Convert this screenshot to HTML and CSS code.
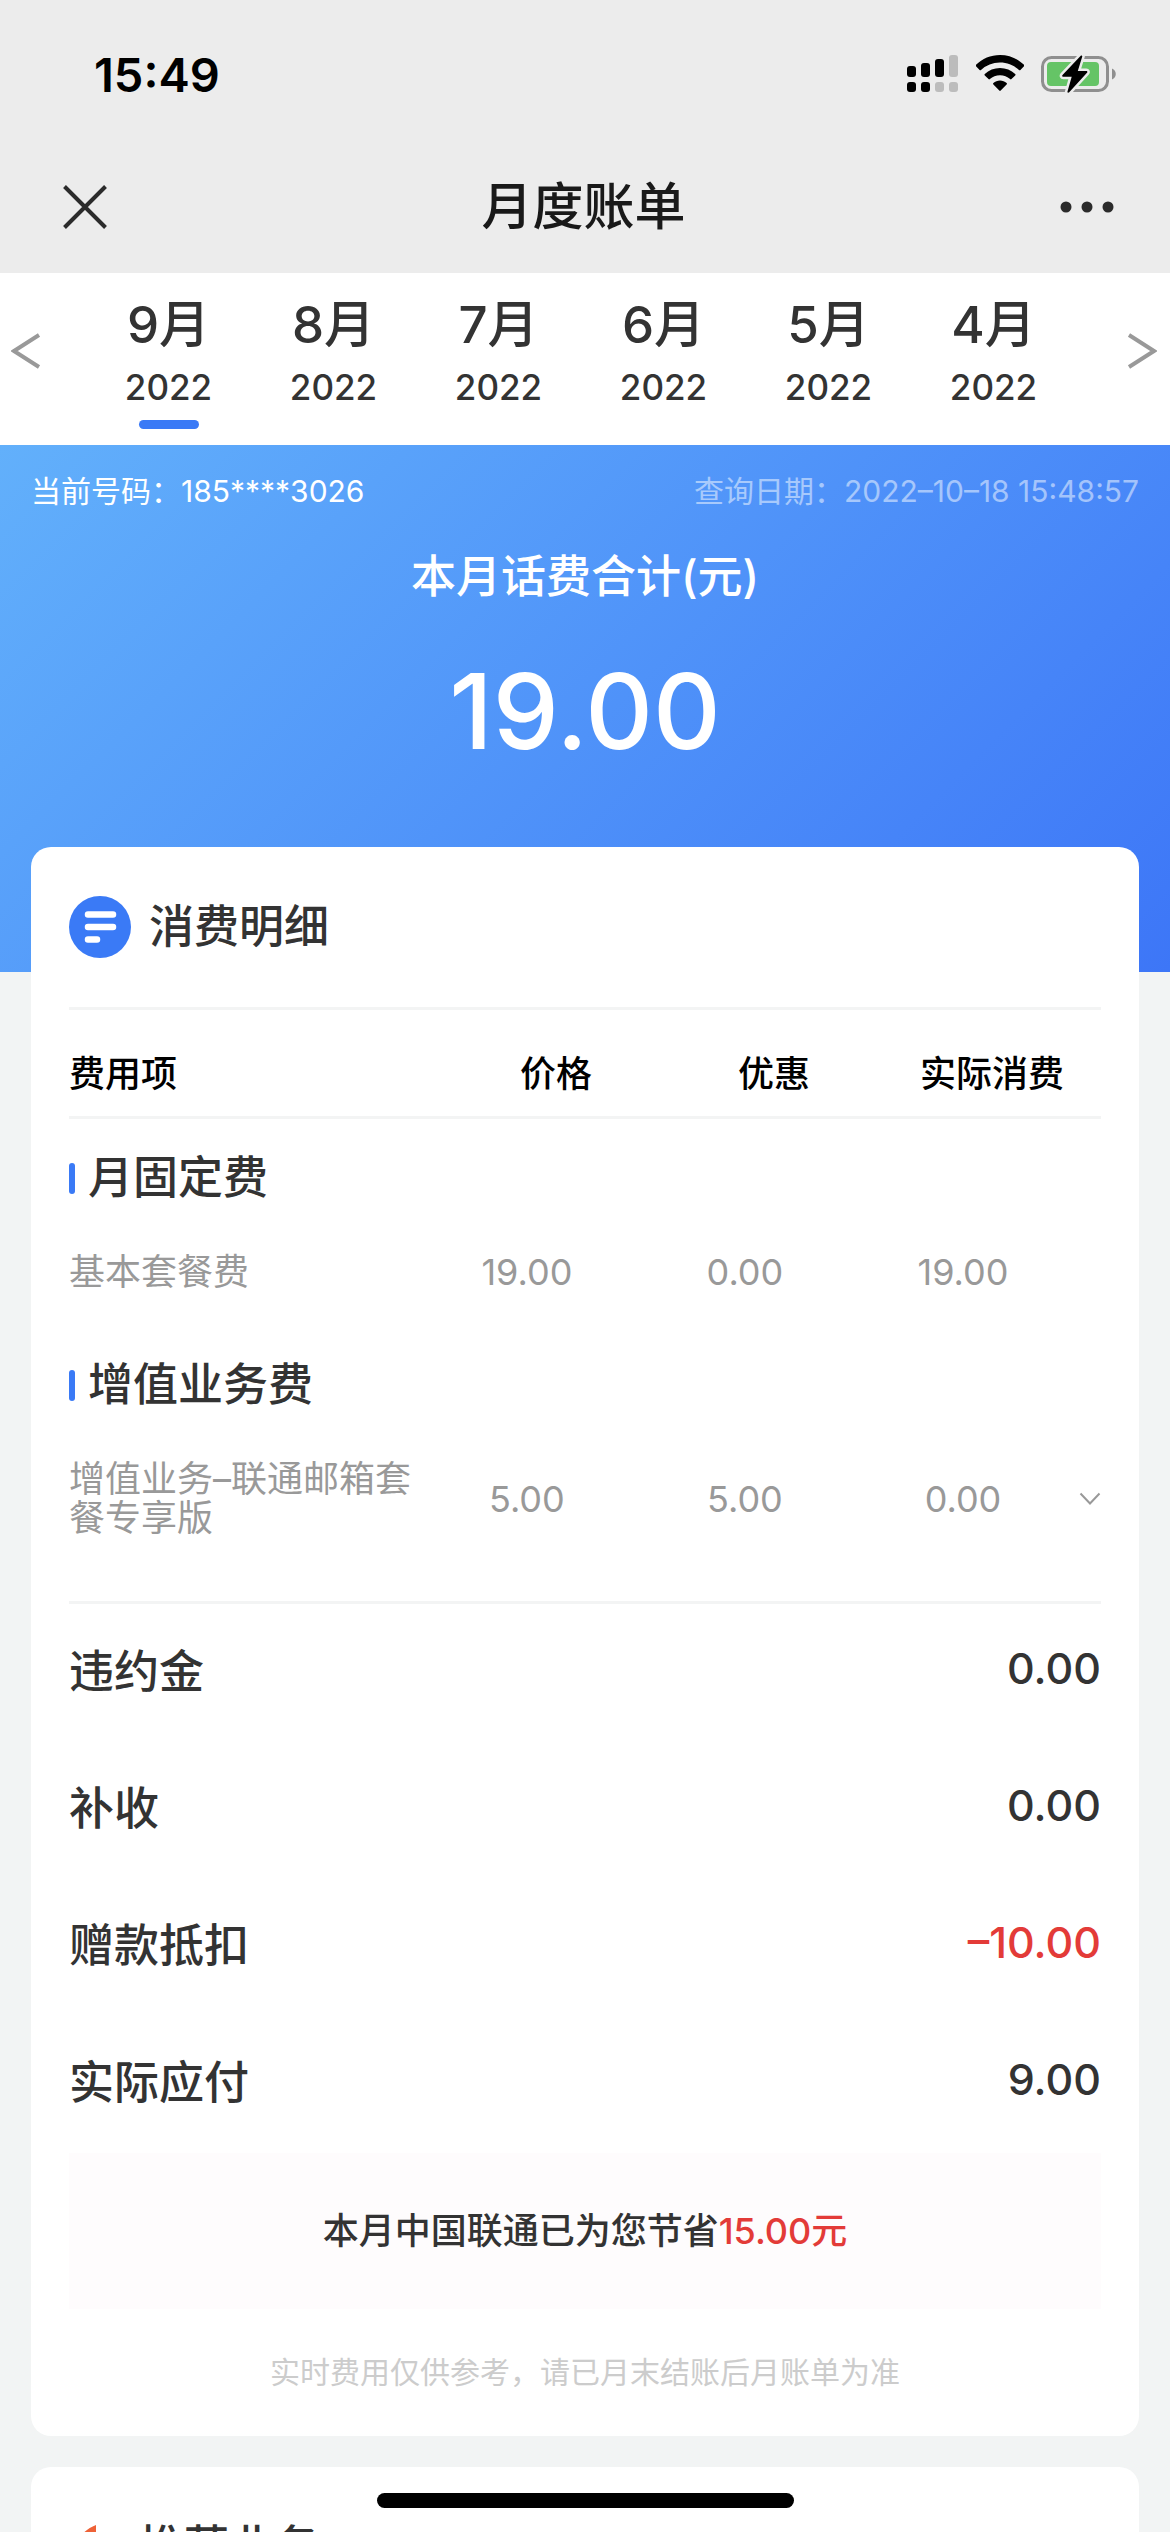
FILE: index.html
```html
<!DOCTYPE html>
<html lang="zh-CN">
<head>
    <meta charset="UTF-8">
    <meta name="viewport" content="width=device-width, initial-scale=1.0">
    <title>月度账单</title>
    <link rel="stylesheet" href="styles.css">
</head>
<body>
    <header class="topbar">
        <div class="status">
            <span class="time">15:49</span>
            <div class="status-icons">
                <svg width="52" height="38" viewBox="0 0 52 38">
                    <rect x="0" y="11" width="9" height="11" rx="3"/>
                    <rect x="14" y="8" width="9" height="14" rx="3"/>
                    <rect x="28" y="4" width="9" height="18" rx="3"/>
                    <rect x="42" y="0" width="9" height="22" rx="3" fill="#bcbcbc"/>
                    <rect x="0" y="27" width="9" height="10" rx="3"/>
                    <rect x="14" y="27" width="9" height="10" rx="3"/>
                    <rect x="28" y="27" width="9" height="10" rx="3" fill="#bcbcbc"/>
                    <rect x="42" y="27" width="9" height="10" rx="3" fill="#bcbcbc"/>
                </svg>
                <svg width="48" height="38" viewBox="0 0 48 38">
                    <path d="M24 0C14.700 0 6.200 3.700 0 9.800a1 1 0 0 0 0 1.400l3.600 3.700a1 1 0 0 0 1.400 0A27.400 27.400 0 0 1 24 7.400c7.400 0 14.100 2.900 19 7.500a1 1 0 0 0 1.400 0l3.600-3.700a1 1 0 0 0 0-1.400C41.800 3.700 33.300 0 24 0z"/>
                    <path d="M24 13c-5.800 0-11.200 2.200-15.200 5.900a1 1 0 0 0 0 1.500l3.700 3.700a1 1 0 0 0 1.400 0c2.700-2.300 6.200-3.800 10.100-3.800s7.400 1.500 10.100 3.800a1 1 0 0 0 1.400 0l3.700-3.700a1 1 0 0 0 0-1.500C35.200 15.200 29.800 13 24 13z"/>
                    <path d="M24 25.500c-2.500 0-4.800.9-6.600 2.400a1 1 0 0 0 0 1.500l5.900 6.200a1 1 0 0 0 1.400 0l5.900-6.200a1 1 0 0 0 0-1.500c-1.800-1.500-4.100-2.400-6.600-2.400z"/>
                </svg>
                <svg width="76" height="38" viewBox="0 0 76 38">
                    <rect x="1.500" y="2.500" width="65" height="33" rx="9" fill="none" stroke="#8f8f8f" stroke-width="3"/>
                    <path d="M71 13.500c5 2 5 9 0 11z" fill="#8f8f8f"/>
                    <rect x="6" y="7" width="52" height="24" rx="4" fill="#65c466"/>
                    <path d="M39.500 1L21.500 20c-.7.800-.3 1.800.8 1.800h8.400L26.500 36.500c-.4 1.300.8 1.700 1.700.8L46 17.800c.7-.8.300-1.800-.8-1.800h-8.400L41.200 1.800c.4-1.300-.8-1.700-1.700-.8z" stroke="#ececec" stroke-width="5" paint-order="stroke"/>
                </svg>
            </div>
        </div>
        <div class="nav">
            <button class="nav-btn" aria-label="关闭">
                <svg width="44" height="44" viewBox="0 0 44 44" fill="none" stroke="#2b2b2b" stroke-width="4">
                    <path d="M1.500 1.500l41 41M42.500 1.500l-41 41"/>
                </svg>
            </button>
            <h1>月度账单</h1>
            <button class="nav-btn" aria-label="更多">
                <svg width="54" height="12" viewBox="0 0 54 12" fill="#2b2b2b">
                    <circle cx="6" cy="6" r="5.500"/>
                    <circle cx="27" cy="6" r="5.500"/>
                    <circle cx="48" cy="6" r="5.500"/>
                </svg>
            </button>
        </div>
    </header>

    <nav class="months">
        <button class="arrow" aria-label="上一页">
            <svg width="30" height="38" viewBox="0 0 30 38" fill="none" stroke="#999" stroke-width="4">
                <path d="M28 3L3 19l25 16"/>
            </svg>
        </button>
        <div class="month-list">
            <button class="month active"><b>9月</b><span>2022</span></button>
            <button class="month"><b>8月</b><span>2022</span></button>
            <button class="month"><b>7月</b><span>2022</span></button>
            <button class="month"><b>6月</b><span>2022</span></button>
            <button class="month"><b>5月</b><span>2022</span></button>
            <button class="month"><b>4月</b><span>2022</span></button>
        </div>
        <button class="arrow" aria-label="下一页">
            <svg width="30" height="38" viewBox="0 0 30 38" fill="none" stroke="#999" stroke-width="4">
                <path d="M2 3l25 16L2 35"/>
            </svg>
        </button>
    </nav>

    <section class="banner">
        <div class="banner-info">
            <span>当前号码：185****3026</span>
            <span class="query-date">查询日期：2022–10–18 15:48:57</span>
        </div>
        <p class="banner-title">本月话费合计(元)</p>
        <p class="banner-amount">19.00</p>
    </section>

    <main class="content">
        <section class="card">
            <h2 class="card-title">
                <svg width="62" height="62" viewBox="0 0 62 62">
                    <circle cx="31" cy="31" r="31" fill="#3a7af6"/>
                    <path d="M19 18.500h25M19 31h25M19 43.500h9" stroke="#fff" stroke-width="6.500" stroke-linecap="round"/>
                </svg>
                消费明细
            </h2>

            <table class="fees">
                <thead>
                    <tr>
                        <th>费用项</th>
                        <th>价格</th>
                        <th>优惠</th>
                        <th>实际消费</th>
                    </tr>
                </thead>
                <tbody>
                    <tr class="group">
                        <th>月固定费</th>
                    </tr>
                    <tr class="fee">
                        <td>基本套餐费</td>
                        <td>19.00</td>
                        <td>0.00</td>
                        <td>19.00</td>
                        <td></td>
                    </tr>
                    <tr class="group">
                        <th>增值业务费</th>
                    </tr>
                    <tr class="fee">
                        <td>增值业务–联通邮箱套餐专享版</td>
                        <td>5.00</td>
                        <td>5.00</td>
                        <td>0.00</td>
                        <td>
                            <button class="expand" aria-label="展开">
                                <svg width="22" height="14" viewBox="0 0 22 14" fill="none" stroke="#999" stroke-width="2">
                                    <path d="M1.500 1.500L11 11.500l9.500-10"/>
                                </svg>
                            </button>
                        </td>
                    </tr>
                </tbody>
            </table>

            <dl class="totals">
                <div><dt>违约金</dt><dd>0.00</dd></div>
                <div><dt>补收</dt><dd>0.00</dd></div>
                <div><dt>赠款抵扣</dt><dd class="red">–10.00</dd></div>
                <div><dt>实际应付</dt><dd>9.00</dd></div>
            </dl>

            <p class="saved">本月中国联通已为您节省<span class="red">15.00元</span></p>
            <p class="tip">实时费用仅供参考，请已月末结账后月账单为准</p>
        </section>

        <section class="card">
            <h2 class="card-title">
                <svg width="52" height="62" viewBox="0 0 52 62">
                    <path d="M27 9C12 15 4 28 4 39c0 12 10 20 22 20s22-8 22-20c0-8-4-14-9-19-1 4-3 6-6 7-4 1-6-1-6-5z" fill="#ee6237"/>
                </svg>
                推荐业务
            </h2>
        </section>
    </main>

    <div class="home-indicator"></div>
</body>
</html>
```

FILE: styles.css
```css
* {
    box-sizing: border-box;
}
body {
    font-family: Inter, "Noto Sans CJK SC", sans-serif;
    background-color: #f2f4f4;
    color: #333;
    margin: 0;
    height: 100vh;
    overflow: hidden;
}
h1, h2, p, dl, dd {
    margin: 0;
}
button {
    font-family: inherit;
    color: inherit;
    background: none;
    border: none;
    padding: 0;
    cursor: pointer;
}
svg {
    display: block;
    flex-shrink: 0;
}
.red {
    color: #e33b38;
}

/* top bar */
.topbar {
    background: #ececec;
    color: #000;
}
.status {
    display: flex;
    justify-content: space-between;
    align-items: center;
    height: 140px;
    padding: 8px 53px 0 94px;
}
.time {
    font-size: 47px;
    font-weight: 600;
}
.status-icons {
    display: flex;
    align-items: center;
    gap: 17px;
}
.nav {
    display: flex;
    justify-content: space-between;
    align-items: center;
    height: 133px;
    padding: 0 56px 0 63px;
}
.nav h1 {
    font-size: 51px;
    font-weight: 500;
    line-height: 72px;
    color: #191919;
}

/* month tabs */
.months {
    display: flex;
    align-items: center;
    justify-content: space-between;
    background: #fff;
    padding: 0 13px 0 11px;
}
.month-list {
    display: flex;
    flex: 1;
    padding: 0 51px 0 45px;
}
.month {
    flex: 1;
    display: flex;
    flex-direction: column;
    align-items: center;
    padding: 20px 0 16px;
}
.month b {
    font-size: 51px;
    font-weight: 500;
    line-height: 64px;
}
.month span {
    font-size: 35px;
    font-weight: 500;
    line-height: 60px;
}
.month::after {
    content: "";
    width: 60px;
    height: 9px;
    margin-top: 3px;
    border-radius: 5px;
}
.month.active::after {
    background: #3a7af6;
}
.arrow {
    padding-bottom: 16px;
}

/* blue banner */
.banner {
    background: linear-gradient(135deg, #62b0fb, #3d76f7);
    color: #fff;
    text-align: center;
    padding: 26px 31px 201px;
}
.banner-info {
    display: flex;
    justify-content: space-between;
    font-size: 30px;
    line-height: 40px;
}
.query-date {
    color: rgba(255, 255, 255, 0.5);
}
.banner-title {
    font-size: 45px;
    font-weight: 500;
    line-height: 64px;
    margin-top: 34px;
}
.banner-amount {
    font-size: 105px;
    font-weight: 500;
    line-height: 120px;
    margin-top: 42px;
}

/* cards */
.content {
    display: flex;
    flex-direction: column;
    gap: 31px;
    margin-top: -125px;
    padding: 0 31px;
}
.card {
    background: #fff;
    border-radius: 20px;
    padding: 0 38px 40px;
}
.card-title {
    display: flex;
    align-items: center;
    gap: 18px;
    padding: 49px 0;
    font-size: 45px;
    font-weight: 500;
    line-height: 62px;
}

/* fee table */
.fees {
    display: block;
    font-size: 36px;
}
.fees thead, .fees tbody {
    display: block;
}
.fees thead {
    border-top: 3px solid #f3f4f4;
    border-bottom: 3px solid #f3f4f4;
    color: #000;
}
.fees tr {
    display: grid;
    align-items: center;
}
.fees th, .fees td {
    padding: 0;
    text-align: center;
}
.fees th {
    font-weight: 500;
}
.fees th:first-child, .fees td:first-child {
    text-align: left;
}
.fees thead tr {
    grid-template-columns: 26fr 15fr 15fr 15fr;
    padding: 40px 0 18px;
    line-height: 48px;
}
.fees .group th {
    display: flex;
    align-items: center;
    gap: 13px;
    padding-top: 27px;
    font-size: 45px;
    line-height: 64px;
}
.group th::before {
    content: "";
    width: 6px;
    height: 31px;
    border-radius: 3px;
    background: #3a7af6;
}
.fees .fee {
    grid-template-columns: 8fr 5fr 5fr 5fr 29px;
    padding: 43px 0 34px;
    color: #999;
    line-height: 39px;
}
.expand {
    display: block;
    margin-left: auto;
}

/* totals */
.totals {
    border-top: 3px solid #f3f4f4;
    margin-top: 29px;
    font-weight: 500;
}
.totals div {
    display: flex;
    justify-content: space-between;
    align-items: center;
    height: 137px;
    padding-bottom: 9px;
}
.totals dt {
    font-size: 45px;
}
.totals dd {
    font-size: 43px;
}
.saved {
    background: #fefcfd;
    margin-top: 1px;
    padding: 54px 0;
    font-size: 36px;
    font-weight: 500;
    line-height: 48px;
    text-align: center;
}
.tip {
    margin-top: 39px;
    font-size: 30px;
    line-height: 48px;
    color: #ccc;
    text-align: center;
}

.home-indicator {
    position: fixed;
    left: 50%;
    bottom: 24px;
    width: 417px;
    height: 15px;
    margin-left: -208px;
    border-radius: 8px;
    background: #000;
}
```
